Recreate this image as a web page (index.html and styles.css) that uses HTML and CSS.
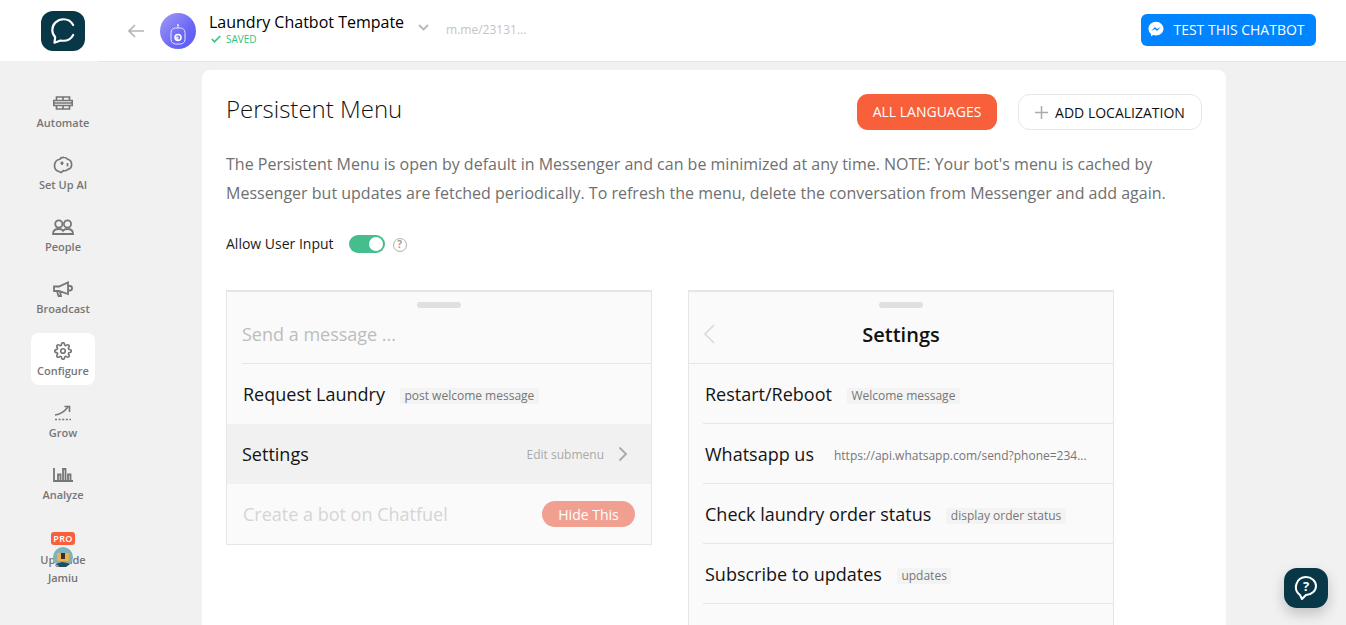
FILE: index.html
```html
<!DOCTYPE html>
<html lang="en">
<head>
<meta charset="utf-8">
<title>Persistent Menu</title>
<link rel="stylesheet" href="styles.css">
</head>
<body>
<div class="app">
  <header class="topbar">
    <div class="logo-cell">
      <div class="logo">
        <svg width="30" height="30" viewBox="0 0 28 28" fill="none" stroke="#fff" stroke-width="2" stroke-linecap="round" stroke-linejoin="round"><path d="M23.5 8.500C21.800 5.200 18.400 3 14.500 3 8.700 3 4 7.500 4 13c0 2.600 1 4.900 2.700 6.700L6 25l5.800-2.200c.9.200 1.800.3 2.700.3 3.900 0 7.300-2.200 9-5.400"/></svg>
      </div>
    </div>
    <svg class="back" width="18" height="14" viewBox="0 0 18 14" fill="none" stroke="#b5b5b5" stroke-width="1.700"><path d="M17 7H2M8 1 2 7l6 6"/></svg>
    <div class="bot-avatar">
      <svg width="36" height="36" viewBox="0 0 36 36"><defs><linearGradient id="bg" x1="0" y1="0" x2="1" y2="1"><stop offset="0" stop-color="#a29bf6"/><stop offset=".6" stop-color="#6c68f6"/><stop offset="1" stop-color="#5558f5"/></linearGradient></defs><circle cx="18" cy="18" r="18" fill="url(#bg)"/><rect x="11" y="15" width="14" height="16" rx="4.500" fill="none" stroke="#e4e4ff" stroke-width="1"/><path d="M18 12v3" stroke="#e4e4ff"/><circle cx="18" cy="12" r="1" fill="#e4e4ff"/><circle cx="18" cy="24.500" r="3" fill="none" stroke="#fff" stroke-width="1.500"/><path d="M15.500 23.500h3v3.500h-3z" fill="#fff" opacity=".8"/></svg>
    </div>
    <div class="bot-title">
      <div class="bot-name">Laundry Chatbot Tempate</div>
      <div class="saved"><svg width="10" height="8" viewBox="0 0 10 8" fill="none" stroke="#2fc27d" stroke-width="1.500"><path d="M.800 4 3.500 6.800 9.200 1"/></svg>SAVED</div>
    </div>
    <svg class="caret" width="11" height="7" viewBox="0 0 11 7" fill="none" stroke="#b8b8b8" stroke-width="1.800"><path d="M1 1l4.500 4.500L10 1"/></svg>
    <div class="bot-link">m.me/23131...</div>
    <button class="test-btn">
      <svg width="16" height="16" viewBox="0 0 16 16"><path fill="#fff" d="M8 .7C3.800.7.500 3.800.500 7.700c0 2.100 1 3.900 2.500 5.200v2.400l2.300-1.300c.8.200 1.700.4 2.700.4 4.200 0 7.500-3.100 7.500-6.700S12.200.7 8 .7z"/><path fill="#0084ff" d="M3.200 10 7 6l2 2 3.800-2-3.800 4-2-2z"/></svg>
      TEST THIS CHATBOT
    </button>
  </header>

  <div class="main">
    <nav class="sidebar">
      <a class="nav-item">
        <svg width="20" height="14" viewBox="0 0 20 14" fill="none" stroke="#767676" stroke-width="1.700"><path d="M3.500 1h13v3.500h2.700v5h-2.700V13h-13V9.500H.8v-5h2.700zM.8 7h18.400M3.500 4.500h13M3.500 9.500h13M10 1v3.500M10 9.500V13"/></svg>
        <span>Automate</span>
      </a>
      <a class="nav-item">
        <svg width="20" height="18" viewBox="0 0 20 18" fill="none" stroke="#767676" stroke-width="1.700"><path d="M6 15.500C3 15 1.500 12.500 1.500 9.500 1.500 6 3.800 3.500 6.500 3.500 7.500 2 9 1.300 11 1.500c1.500 0 2.800.7 3.600 1.800 2.300.6 4 2.700 4 5.200 0 2.500-1.500 4.300-3.600 4.800-1 1.300-2.700 1.700-4.300 1.200L8 16.500z"/><path d="M9 5.500v3.500M7.500 7.200h3M14.500 7v3.500"/></svg>
        <span>Set Up AI</span>
      </a>
      <a class="nav-item">
        <svg width="22" height="16" viewBox="0 0 22 16" fill="none" stroke="#767676" stroke-width="1.800"><circle cx="6.800" cy="5" r="3.600"/><circle cx="15.500" cy="5" r="3.600"/><path d="M1 15c0-3 2-5 5.800-5 2.200 0 3.500.6 4.300 1.800.8-1.200 2.200-1.800 4.400-1.800 3.800 0 5.500 2 5.500 5z"/></svg>
        <span>People</span>
      </a>
      <a class="nav-item">
        <svg width="20" height="16" viewBox="0 0 20 16" fill="none" stroke="#767676" stroke-width="1.800"><path d="M1 5.500h5L15 1.500v11.500L6 10H1zM15 5h1.800a2 2 0 0 1 0 4.500H15M4 10l1.500 5H8L7 10.500"/></svg>
        <span>Broadcast</span>
      </a>
      <a class="nav-item active">
        <svg width="18" height="18" viewBox="0 0 24 24" fill="none" stroke="#767676" stroke-width="2.200"><circle cx="12" cy="12" r="3"/><path d="M19.400 15a1.650 1.650 0 0 0 .33 1.820l.06.06a2 2 0 0 1 0 2.830 2 2 0 0 1-2.830 0l-.06-.06a1.650 1.650 0 0 0-1.820-.33 1.650 1.650 0 0 0-1 1.510V21a2 2 0 0 1-2 2 2 2 0 0 1-2-2v-.09A1.650 1.650 0 0 0 9 19.400a1.650 1.650 0 0 0-1.820.33l-.06.06a2 2 0 0 1-2.830 0 2 2 0 0 1 0-2.830l.06-.06a1.650 1.650 0 0 0 .33-1.820 1.650 1.650 0 0 0-1.510-1H3a2 2 0 0 1-2-2 2 2 0 0 1 2-2h.09A1.650 1.650 0 0 0 4.600 9a1.650 1.650 0 0 0-.33-1.820l-.06-.06a2 2 0 0 1 0-2.830 2 2 0 0 1 2.830 0l.06.06a1.650 1.650 0 0 0 1.820.33H9a1.650 1.650 0 0 0 1-1.510V3a2 2 0 0 1 2-2 2 2 0 0 1 2 2v.09a1.650 1.650 0 0 0 1 1.510 1.650 1.650 0 0 0 1.820-.33l.06-.06a2 2 0 0 1 2.830 0 2 2 0 0 1 0 2.830l-.06.06a1.650 1.650 0 0 0-.33 1.820V9a1.650 1.650 0 0 0 1.510 1H21a2 2 0 0 1 2 2 2 2 0 0 1-2 2h-.09a1.650 1.650 0 0 0-1.510 1z"/></svg>
        <span>Configure</span>
      </a>
      <a class="nav-item">
        <svg width="18" height="16" viewBox="0 0 18 16" fill="none" stroke="#767676" stroke-width="1.600"><path d="M1 10c6-.5 9-3 13-8"/><path d="M10.500 1.500h5V7"/><path d="M1 14.500h16" stroke-dasharray="2 1.600"/></svg>
        <span>Grow</span>
      </a>
      <a class="nav-item">
        <svg width="20" height="14" viewBox="0 0 20 14" fill="none" stroke="#767676" stroke-width="1.800"><path d="M1 0v13h19M5 13V6.500h2.500V13M10 13V1h2.500v12M15 13V6.500h2.500V13"/></svg>
        <span>Analyze</span>
      </a>
      <a class="nav-item upgrade">
        <span class="pro">PRO</span>
        <span>Upgrade</span>
        <span class="avatar-name">Jamiu</span>
        <svg class="user-avatar" width="20" height="20" viewBox="0 0 20 20"><circle cx="10" cy="10" r="10" fill="#7fb3bb"/><rect x="4" y="6" width="12" height="8" rx="1" fill="#efb04a"/><rect x="8" y="6" width="4" height="6" fill="#33302e"/><path d="M3 17l6-2 5 1 3 1-4 3H7z" fill="#1f4d63"/></svg>
      </a>
    </nav>

    <main class="card">
      <div class="card-head">
        <h1>Persistent Menu</h1>
        <div class="head-actions">
          <button class="lang-btn">ALL LANGUAGES</button>
          <button class="add-btn"><svg width="13" height="13" viewBox="0 0 13 13" stroke="#aaa" stroke-width="1.500"><path d="M6.500 0v13M0 6.500h13"/></svg>ADD LOCALIZATION</button>
        </div>
      </div>
      <p class="desc">The Persistent Menu is open by default in Messenger and can be minimized at any time. NOTE: Your bot's menu is cached by Messenger but updates are fetched periodically. To refresh the menu, delete the conversation from Messenger and add again.</p>
      <div class="input-row">
        <span>Allow User Input</span>
        <span class="toggle"><span class="knob"></span></span>
        <span class="help">?</span>
      </div>
      <div class="menus">
        <section class="phone">
          <div class="grip"></div>
          <div class="phone-head placeholder">Send a message ...</div>
          <div class="row first"><span class="row-title">Request Laundry</span><span class="tag">post welcome message</span></div>
          <div class="row hl">
            <span class="row-title">Settings</span>
            <span class="edit">Edit submenu</span>
            <svg width="10" height="16" viewBox="0 0 10 16" fill="none" stroke="#a9a9a9" stroke-width="1.800"><path d="M1.500 1.500 8 8l-6.500 6.500"/></svg>
          </div>
          <div class="row promo">
            <span class="row-title muted">Create a bot on Chatfuel</span>
            <button class="hide-btn">Hide This</button>
          </div>
        </section>
        <section class="phone open">
          <div class="grip"></div>
          <div class="phone-head title">
            <svg class="chev" width="12" height="20" viewBox="0 0 12 20" fill="none" stroke="#dcdcdc" stroke-width="1.700"><path d="M11 1 2 10l9 9"/></svg>
            Settings
          </div>
          <div class="row line"><span class="row-title">Restart/Reboot</span><span class="tag">Welcome message</span></div>
          <div class="row line"><span class="row-title">Whatsapp us</span><span class="url">https://api.whatsapp.com/send?phone=234...</span></div>
          <div class="row line"><span class="row-title">Check laundry order status</span><span class="tag">display order status</span></div>
          <div class="row line"><span class="row-title">Subscribe to updates</span><span class="tag">updates</span></div>
        </section>
      </div>
    </main>
  </div>

  <button class="help-fab">
    <svg width="24" height="26" viewBox="0 0 24 26" fill="none" stroke="#fff" stroke-width="2"><path d="M12 2a10 10 0 0 0-6 18l2 4 4-4a10 9 0 0 0 0-18z" stroke-linejoin="round"/><text x="12" y="15.500" text-anchor="middle" class="fab-q">?</text></svg>
  </button>
</div>
</body>
</html>
```
FILE: styles.css
```css
* { box-sizing: border-box; }
html, body { margin: 0; height: 100%; }
body { font-family: "Open Sans", sans-serif; color: #000; background: #f1f1f1; overflow: hidden; }
button { font-family: inherit; border: 0; cursor: pointer; }
.app { position: relative; height: 625px; overflow: hidden; display: flex; flex-direction: column; }

.topbar { position: relative; height: 62px; flex: none; background: #fff; border-bottom: 1px solid #e6e6e6; display: flex; align-items: center; }
.topbar::after { content: ""; position: absolute; left: 0; bottom: -1px; width: 98px; height: 1px; background: #f1f1f1; }
.logo-cell { width: 127px; flex: none; padding-left: 41px; }
.logo { width: 44px; height: 40px; background: #083748; border-radius: 12px; display: flex; align-items: center; justify-content: center; }
.back { flex: none; margin-right: 15px; }
.bot-avatar { width: 36px; height: 36px; flex: none; margin-right: 13px; }
.bot-avatar svg { display: block; }
.bot-title { flex: none; margin-right: 14px; margin-bottom: 4px; }
.bot-name { font-size: 16px; line-height: 20px; }
.saved { display: flex; align-items: center; gap: 5px; font-size: 10px; line-height: 12px; color: #2fc27d; padding-left: 2px; margin-top: 1px; }
.caret { flex: none; margin: 0 17px 6px 0; }
.bot-link { font-size: 12px; color: #c4c4c4; margin-bottom: 3px; }
.test-btn { margin-left: auto; margin-right: 30px; margin-bottom: 1px; width: 175px; height: 32px; background: #0084ff; color: #fff; border-radius: 6px; font-size: 14px; display: flex; align-items: center; justify-content: center; gap: 9px; padding: 0 4px 2px 0; }

.main { flex: 1; display: flex; min-height: 0; }
.sidebar { width: 202px; flex: none; padding: 23px 0 0 31px; display: flex; flex-direction: column; gap: 10px; }
.nav-item { width: 64px; height: 52px; border-radius: 8px; display: flex; flex-direction: column; align-items: center; justify-content: flex-start; padding-top: 9px; color: #767676; font-size: 11px; font-weight: 600; line-height: 15px; }
.nav-item svg { height: 18px; display: block; margin-bottom: 3px; flex: none; }
.nav-item.active { background: #fff; }
.upgrade { position: relative; padding-top: 12px; margin-top: 1px; }
.pro { background: #f85f3b; color: #fff; font-size: 9px; line-height: 13px; height: 13px; width: 24px; text-align: center; border-radius: 3px; letter-spacing: .3px; margin-bottom: 7px; }
.avatar-name { margin-top: 3px; }
.nav-item .user-avatar { position: absolute; left: 22px; top: 27px; height: 20px; margin: 0; }

.card { width: 1024px; flex: none; background: #fff; border-radius: 8px 8px 0 0; margin-top: 8px; padding: 24px 24px 0; overflow: hidden; }
.card-head { display: flex; justify-content: space-between; align-items: flex-start; }
h1 { margin: 0; font-size: 24px; font-weight: 300; line-height: 30px; color: #111; }
.head-actions { display: flex; gap: 21px; }
.lang-btn { width: 140px; height: 36px; border-radius: 11px; background: #f85f3b; color: #fff; font-size: 14px; padding: 0 0 2px; }
.add-btn { width: 184px; height: 36px; border-radius: 12px; background: #fff; border: 1px solid #e6e6e6; color: #111; font-size: 14px; display: flex; align-items: center; justify-content: center; gap: 7px; padding: 0; }
.desc { margin: 20px 0 0; width: 960px; font-size: 16px; line-height: 29px; color: #6f6f6f; }
.input-row { display: flex; align-items: center; margin-top: 26px; font-size: 14px; line-height: 20px; color: #1b1b1b; height: 20px; }
.toggle { width: 36px; height: 18px; border-radius: 9px; background: #46bd8c; margin-left: 15px; position: relative; }
.knob { position: absolute; right: 2px; top: 2px; width: 14px; height: 14px; border-radius: 50%; background: #fff; }
.help { width: 14px; height: 14px; margin: 1px 0 0 8px; border: 1.500px solid #b0b0b0; border-radius: 50%; color: #a0a0a0; font-size: 10px; font-weight: 700; line-height: 11px; text-align: center; }

.menus { display: flex; gap: 36px; margin-top: 36px; align-items: flex-start; }
.phone { width: 426px; background: #fafafa; border: 1px solid #e6e6e6; border-top-width: 2px; position: relative; }
.grip { position: absolute; left: 50%; top: 10px; width: 44px; height: 6px; margin-left: -22px; border-radius: 3px; background: #e0e0e0; }
.phone-head { height: 72px; padding: 27px 15px 0; font-size: 18px; line-height: 32px; }
.placeholder { color: #bdbdbd; position: relative; padding-top: 26px; }
.placeholder::after { content: ""; position: absolute; left: 15px; right: 0; bottom: 0; height: 1px; background: #e6e6e6; }
.title { font-weight: 600; font-size: 20px; text-align: center; position: relative; border-bottom: 1px solid #e6e6e6; color: #111; }
.chev { position: absolute; left: 14px; top: 32px; }
.row { height: 60px; display: flex; align-items: center; padding: 0 16px; font-size: 18px; }
.row-title { color: #141414; white-space: nowrap; }
.tag { margin-left: 15px; margin-top: 4px; background: #f3f3f3; color: #767676; font-size: 12px; line-height: 16px; padding: 0 4.500px; border-radius: 3px; white-space: nowrap; }
.url { margin-left: 20px; margin-top: 2px; color: #767676; font-size: 12px; white-space: nowrap; }
.hl { background: #f1f1f1; padding-left: 15px; }
.edit { margin-left: auto; margin-right: 14px; font-size: 12px; color: #a9a9a9; }
.hl svg { margin-right: 7px; flex: none; }
.promo { justify-content: space-between; }
.muted { color: #d5d5d5; }
.hide-btn { width: 93px; height: 26px; border-radius: 13px; background: #f19f90; color: #fff; font-size: 14px; padding: 0; }
.open { padding-bottom: 60px; }
.line { position: relative; }
.line::after { content: ""; position: absolute; left: 14px; right: 0; bottom: 0; height: 1px; background: #e6e6e6; }

.help-fab { position: absolute; left: 1284px; top: 568px; width: 44px; height: 40px; border-radius: 13px; background: #083748; box-shadow: 0 6px 14px rgba(0,0,0,.2); display: flex; align-items: center; justify-content: center; padding: 0; }
.fab-q { fill: #fff; stroke: none; font-size: 13px; font-weight: 700; font-family: "Open Sans", sans-serif; }
```
